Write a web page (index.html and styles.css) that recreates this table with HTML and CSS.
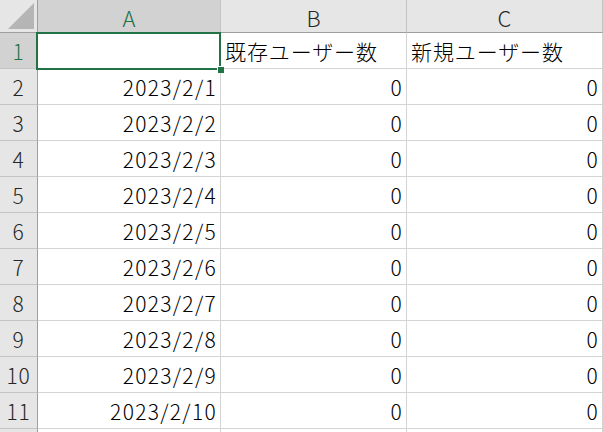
FILE: index.html
```html
<!DOCTYPE html>
<html lang="ja">
<head>
<meta charset="utf-8">
<link rel="stylesheet" href="styles.css">
</head>
<body>
<div class="sheet">
  <div class="grid">
    <div class="corner"><span class="tri"></span></div>
    <div class="colhead sel">A</div>
    <div class="colhead">B</div>
    <div class="colhead last">C</div>

    <div class="rowhead sel">1</div>
    <div class="cell a1"></div>
    <div class="cell txt">既存ユーザー数</div>
    <div class="cell txt last">新規ユーザー数</div>

    <div class="rowhead">2</div><div class="cell num">2023/2/1</div><div class="cell num">0</div><div class="cell num last">0</div>
    <div class="rowhead">3</div><div class="cell num">2023/2/2</div><div class="cell num">0</div><div class="cell num last">0</div>
    <div class="rowhead">4</div><div class="cell num">2023/2/3</div><div class="cell num">0</div><div class="cell num last">0</div>
    <div class="rowhead">5</div><div class="cell num">2023/2/4</div><div class="cell num">0</div><div class="cell num last">0</div>
    <div class="rowhead">6</div><div class="cell num">2023/2/5</div><div class="cell num">0</div><div class="cell num last">0</div>
    <div class="rowhead">7</div><div class="cell num">2023/2/6</div><div class="cell num">0</div><div class="cell num last">0</div>
    <div class="rowhead">8</div><div class="cell num">2023/2/7</div><div class="cell num">0</div><div class="cell num last">0</div>
    <div class="rowhead">9</div><div class="cell num">2023/2/8</div><div class="cell num">0</div><div class="cell num last">0</div>
    <div class="rowhead">10</div><div class="cell num">2023/2/9</div><div class="cell num">0</div><div class="cell num last">0</div>
    <div class="rowhead">11</div><div class="cell num">2023/2/10</div><div class="cell num">0</div><div class="cell num last">0</div>
    <div class="rowhead"></div><div class="cell"></div><div class="cell"></div><div class="cell last"></div>
  </div>
  <div class="selection"><span class="handle"></span></div>
</div>
</body>
</html>
```
FILE: styles.css
```css
html, body {
  margin: 0;
  padding: 0;
  background: #ffffff;
  overflow: hidden;
}
body {
  width: 603px;
  height: 432px;
  font-family: "Noto Sans CJK JP", "Noto Sans", sans-serif;
  font-weight: 300;
  color: #000;
}
.sheet {
  position: relative;
  width: 603px;
  height: 432px;
  overflow: hidden;
}
.grid {
  display: grid;
  grid-template-columns: 38px 183px 186px 196px;
  grid-template-rows: 33px repeat(12, 36px);
}
.grid > div {
  box-sizing: border-box;
  border-right: 1px solid #d4d4d4;
  border-bottom: 1px solid #d4d4d4;
  display: flex;
  align-items: center;
  overflow: hidden;
  white-space: nowrap;
}
.corner {
  background: #e6e6e6;
  border-right-color: #9e9e9e !important;
  border-bottom-color: #9e9e9e !important;
  position: relative;
}
.tri {
  position: absolute;
  left: 8px;
  top: 3px;
  width: 26px;
  height: 26px;
  background: #b5b5b5;
  clip-path: polygon(100% 0, 100% 100%, 0 100%);
}
.colhead {
  background: #e6e6e6;
  border-right-color: #c4c4c4 !important;
  border-bottom-color: #9e9e9e !important;
  justify-content: center;
  font-size: 22px;
  color: #262626;
  padding-top: 1px;
}
.rowhead {
  background: #e6e6e6;
  border-right-color: #9e9e9e !important;
  border-bottom-color: #c4c4c4 !important;
  justify-content: center;
  font-size: 21px;
  letter-spacing: 0.8px;
  color: #262626;
  padding-top: 1px;
}
.colhead.sel, .rowhead.sel {
  background: #d2d2d2;
  color: #217346;
}
.cell {
  font-size: 21px;
  letter-spacing: 0.9px;
  padding: 1px 3px 0 4px;
}
.cell.num {
  justify-content: flex-end;
  letter-spacing: 1.3px;
  padding-right: 3px;
}
.cell.txt {
  justify-content: flex-start;
}
.selection {
  position: absolute;
  left: 36px;
  top: 32px;
  width: 181px;
  height: 34px;
  border: 2px solid #217346;
  pointer-events: none;
}
.handle {
  position: absolute;
  right: -5px;
  bottom: -5px;
  width: 6px;
  height: 6px;
  background: #217346;
  border: 1px solid #ffffff;
  border-width: 1px 0 0 1px;
}
```
